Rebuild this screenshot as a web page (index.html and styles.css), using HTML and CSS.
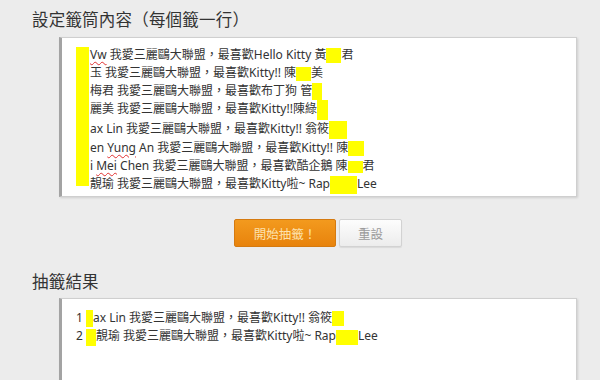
FILE: index.html
```html
<!DOCTYPE html>
<html lang="zh-Hant">
    <head>
        <meta charset="utf-8">
        <title>抽籤</title>
        <link rel="stylesheet" href="styles.css">
    </head>
    <body>
      <div class="page">
        <h2 class="title">設定籤筒內容（每個籤一行）</h2>
        <div class="box box-input">
          <div class="bar"></div>
          <div class="line"><span class="typo">Vw</span> 我愛三麗鷗大聯盟，最喜歡Hello Kitty 黃<span class="mask m1"></span>君</div>
          <div class="line">玉 我愛三麗鷗大聯盟，最喜歡Kitty!! 陳<span class="mask m2"></span>美</div>
          <div class="line">梅君 我愛三麗鷗大聯盟，最喜歡布丁狗 管<span class="mask m3"></span></div>
          <div class="line">麗美 我愛三麗鷗大聯盟，最喜歡Kitty!!陳綠<span class="mask m4"></span></div>
          <div class="line">ax Lin 我愛三麗鷗大聯盟，最喜歡Kitty!! 翁筱<span class="mask m5"></span></div>
          <div class="line">en <span class="typo">Yung</span> An 我愛三麗鷗大聯盟，最喜歡Kitty!! 陳<span class="mask m6"></span></div>
          <div class="line">i <span class="typo">Mei</span> Chen 我愛三麗鷗大聯盟，最喜歡酷企鵝 陳<span class="mask m7"></span>君</div>
          <div class="line">靚瑜 我愛三麗鷗大聯盟，最喜歡Kitty啦~ Rap<span class="mask m8"></span>Lee</div>
        </div>
        <div class="actions">
          <button class="btn btn-go">開始抽籤！</button>
          <button class="btn btn-reset">重設</button>
        </div>
        <h2 class="title title-result">抽籤結果</h2>
        <div class="box box-result">
          <div class="line">1 <span class="mask r1"></span>ax Lin 我愛三麗鷗大聯盟，最喜歡Kitty!! 翁筱<span class="mask r2"></span></div>
          <div class="line">2 <span class="mask r3"></span>靚瑜 我愛三麗鷗大聯盟，最喜歡Kitty啦~ Rap<span class="mask r4"></span>Lee</div>
        </div>
      </div>
    </body>
</html>
```

FILE: styles.css
```css
html, body { margin: 0; background: #ececec; }
body { font-family: "Noto Sans", "Noto Sans CJK TC", sans-serif; color: #333; overflow: hidden; }
.page { padding: 8px 0 0 32px; width: 545px; }
.title { margin: 0 0 5px 0; font-size: 16.5px; font-weight: normal; line-height: 24px; color: #333; letter-spacing: 0.2px; }
.title-result { margin-bottom: 4px; }
.box { margin-left: 27px; width: 514px; background: #fff; border: 1px solid #cfcfcf; border-left: 3px solid #a3a3a3; box-shadow: 1px 1px 2px rgba(0,0,0,0.12); position: relative; font-size: 12px; }
.box-input { height: 150px; padding: 8px 0 0 28px; box-sizing: content-box; width: 486px; }
.box-input .line { line-height: 18px; white-space: nowrap; }
.bar { position: absolute; left: 14px; top: 9px; width: 13px; height: 139px; background: #ffff00; }
.typo { text-decoration: underline wavy #e03030; text-decoration-thickness: 1px; text-underline-offset: 2px; }
.mask { display: inline-block; background: #ffff00; vertical-align: middle; height: 15px; }
.m1 { width: 15px; }
.m2 { width: 15px; height: 14px; }
.m3 { width: 10px; height: 17px; }
.m4 { width: 11px; height: 20px; }
.m5 { width: 18px; height: 18px; }
.m6 { width: 16px; }
.m7 { width: 15px; height: 12px; }
.m8 { width: 27px; height: 18px; }
.actions { display: flex; justify-content: center; gap: 3px; margin: 22px 0 23px 27px; width: 518px; }
.btn { height: 28px; font-family: "Noto Sans CJK TC", sans-serif; font-size: 12.5px; border-radius: 2px; padding: 0; }
.btn-go { width: 102px; color: #fde2ae; background: linear-gradient(#f39a1e, #e8830c); border: 1px solid #d57a10; }
.btn-reset { width: 63px; color: #9a9a9a; background: linear-gradient(#fdfdfd, #ececec); border: 1px solid #d2d2d2; box-shadow: 0 1px 1px rgba(0,0,0,0.08); }
.box-result { height: 71px; padding: 10px 0 0 14px; width: 500px; border-bottom: 0; }
.box-result .line { line-height: 17px; white-space: nowrap; }
.r1 { width: 7px; height: 17px; }
.r2 { width: 12px; height: 15px; }
.r3 { width: 10px; height: 17px; }
.r4 { width: 22px; height: 15px; }
```
